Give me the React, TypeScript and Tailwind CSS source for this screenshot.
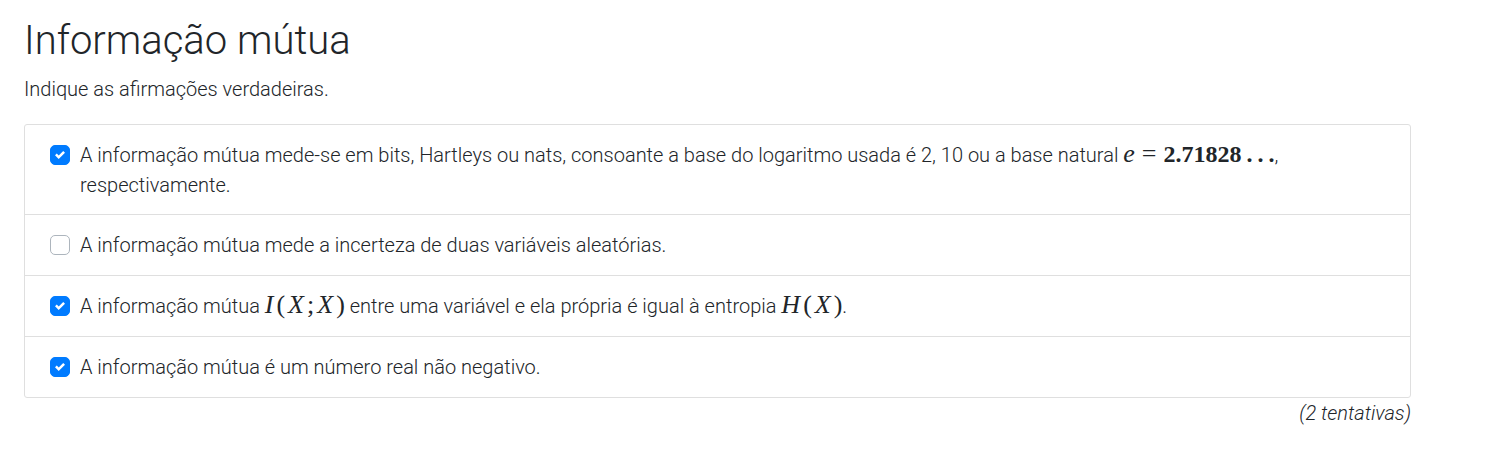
import { useState, type ReactNode } from "react";

function Formula({ children }: { children: ReactNode }) {
  return (
    <span className="inline-flex items-baseline gap-[3px] font-['Liberation_Serif',serif] text-[26px] leading-none font-normal whitespace-nowrap">
      {children}
    </span>
  );
}

const options: { id: string; initial: boolean; content: ReactNode }[] = [
  {
    id: "unidades",
    initial: true,
    content: (
      <>
        A informação mútua mede-se em bits, Hartleys ou nats, consoante a base do logaritmo usada é 2, 10 ou a base
        natural{" "}
        <Formula>
          <i>e</i>
          <span className="mx-1">=</span>
          <b className="text-[24px] leading-none">2.71828</b>
          <span className="ml-0.5 flex gap-[5px] text-[24px] leading-none font-bold">
            <span>.</span>
            <span>.</span>
            <span>.</span>
          </span>
        </Formula>
        , respectivamente.
      </>
    ),
  },
  { id: "incerteza", initial: false, content: "A informação mútua mede a incerteza de duas variáveis aleatórias." },
  {
    id: "entropia",
    initial: true,
    content: (
      <>
        A informação mútua{" "}
        <Formula>
          <i>I</i>
          <span>(</span>
          <i>X</i>
          <span>;</span>
          <i>X</i>
          <span>)</span>
        </Formula>{" "}
        entre uma variável e ela própria é igual à entropia{" "}
        <Formula>
          <i>H</i>
          <span>(</span>
          <i>X</i>
          <span>)</span>
        </Formula>
        .
      </>
    ),
  },
  { id: "real", initial: true, content: "A informação mútua é um número real não negativo." },
];

function Option({ id, initial, content }: { id: string; initial: boolean; content: ReactNode }) {
  const [checked, setChecked] = useState(initial);
  return (
    <li className="border-b border-[#dfdfdf] py-[15px] pr-6 pl-[25px] first:pb-[14px] last:border-b-0">
      <label htmlFor={id} className="flex gap-[10px]">
        <span className="grid h-[30px] shrink-0 place-items-center">
          <input
            id={id}
            type="checkbox"
            checked={checked}
            onChange={(e) => setChecked(e.target.checked)}
            className="peer col-start-1 row-start-1 size-5 appearance-none rounded-[5px] border border-[#adb5bd] bg-white checked:border-[#007bff] checked:bg-[#007bff]"
          />
          <svg viewBox="0 0 8 8" className="pointer-events-none invisible col-start-1 row-start-1 size-[10px] peer-checked:visible">
            <path fill="#fff" d="M6.564.75l-3.59 3.612-1.538-1.55L0 4.26l2.974 2.99L8 2.193z" />
          </svg>
        </span>
        <span>{content}</span>
      </label>
    </li>
  );
}

export default function App() {
  return (
    <main className="bg-white pt-[17px] pr-[84px] pl-6 font-[Roboto,sans-serif] text-[20px] leading-[30px] font-light text-[#212529]">
      <h1 className="mb-[9px] text-[40px] leading-[48px]">Informação mútua</h1>
      <p className="mb-5">Indique as afirmações verdadeiras.</p>
      <ul className="rounded-[3px] border border-[#dfdfdf]">
        {options.map((option) => (
          <Option key={option.id} {...option} />
        ))}
      </ul>
      <p className="text-right italic">(2 tentativas)</p>
    </main>
  );
}
